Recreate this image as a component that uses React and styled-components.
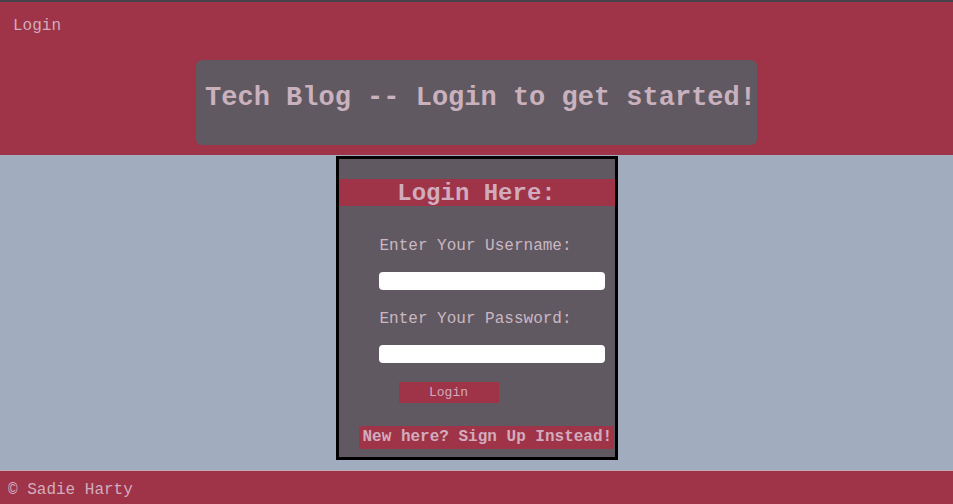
import styled, { createGlobalStyle } from 'styled-components'

const colors = {
  red: '#9f3448',
  panel: '#615961',
  bg: '#a1adbe',
  text: '#d2acbd',
  label: '#cbb7c1',
}

const GlobalStyle = createGlobalStyle`
  html, body {
    margin: 0;
    padding: 0;
  }
  body {
    font-family: "Liberation Mono", "Courier New", monospace;
    background: ${colors.bg};
  }
  #root {
    min-height: 100vh;
    display: flex;
    flex-direction: column;
  }
`

export default function App() {
  return (
    <>
      <GlobalStyle />
      <Header>
        <Nav>
          <NavLink href="#">Login</NavLink>
        </Nav>
        <TitleBox>
          <Title>Tech Blog -- Login to get started!</Title>
        </TitleBox>
      </Header>
      <Main>
        <Card>
          <CardTitle>Login Here:</CardTitle>
          <Form onSubmit={(e) => e.preventDefault()}>
            <Label htmlFor="username">Enter Your Username:</Label>
            <Input id="username" type="text" />
            <Label htmlFor="password" $top={20}>Enter Your Password:</Label>
            <Input id="password" type="password" />
            <SubmitButton type="submit">Login</SubmitButton>
          </Form>
          <SignupLink href="#">New here? Sign Up Instead!</SignupLink>
        </Card>
      </Main>
      <Footer>© Sadie Harty</Footer>
    </>
  )
}

const Header = styled.header`
  background: ${colors.red};
  border-top: 2px solid #45424a;
  display: flex;
  flex-direction: column;
  align-items: center;
  padding-bottom: 10px;
`

const Nav = styled.nav`
  align-self: stretch;
  height: 58px;
  padding: 15px 13px 0;
  box-sizing: border-box;
`

const NavLink = styled.a`
  color: ${colors.text};
  text-decoration: none;
  font-size: 16px;
`

const TitleBox = styled.div`
  background: ${colors.panel};
  border-radius: 6px;
  padding: 23px 1px 31px 9px;
`

const Title = styled.h1`
  margin: 0;
  font-size: 27px;
  line-height: 31px;
  font-weight: bold;
  color: #c9b1bd;
  white-space: nowrap;
`

const Main = styled.main`
  flex: 1;
  display: flex;
  justify-content: center;
  align-items: flex-start;
  padding: 1px 0 10px;
`

const Card = styled.section`
  width: 276px;
  background: ${colors.panel};
  border: 3px solid #000;
  display: flex;
  flex-direction: column;
  padding: 20px 0 8px;
`

const CardTitle = styled.h2`
  margin: 0;
  background: ${colors.red};
  color: ${colors.text};
  font-size: 24px;
  line-height: 27px;
  font-weight: bold;
  text-align: center;
  padding-top: 1px;
  height: 27px;
  box-sizing: border-box;
`

const Form = styled.form`
  display: flex;
  flex-direction: column;
  align-items: flex-start;
  padding: 31px 10px 0 40px;
`

const Label = styled.label`
  color: ${colors.label};
  font-size: 16px;
  line-height: 18px;
  margin-top: ${(p) => p.$top || 0}px;
  margin-bottom: 17px;
  padding-left: 1px;
`

const Input = styled.input`
  width: 226px;
  height: 18px;
  box-sizing: border-box;
  border: none;
  border-radius: 4px;
  background: #fff;
  padding: 0 4px;
  outline: none;
`

const SubmitButton = styled.button`
  margin: 19px 0 0 20px;
  width: 100px;
  height: 21px;
  border: none;
  background: ${colors.red};
  color: ${colors.text};
  font-family: inherit;
  font-size: 13px;
  padding: 0;
  cursor: pointer;
`

const SignupLink = styled.a`
  align-self: flex-start;
  margin: 23px 0 0 20px;
  width: 255px;
  box-sizing: border-box;
  padding: 0 3px 0 4px;
  background: ${colors.red};
  color: ${colors.text};
  text-decoration: none;
  font-size: 16px;
  line-height: 23px;
  font-weight: bold;
  white-space: nowrap;
`

const Footer = styled.footer`
  background: ${colors.red};
  color: ${colors.text};
  font-size: 16px;
  height: 34px;
  line-height: 38px;
  padding: 0 8px;
  border-top: 1px solid #c4a9b3;
  box-sizing: border-box;
`
